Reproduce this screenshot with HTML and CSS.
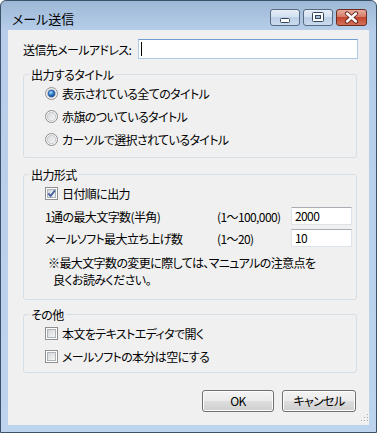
FILE: index.html
```html
<!DOCTYPE html>
<html lang="ja">
<head>
<meta charset="utf-8">
<title>メール送信</title>
<link rel="stylesheet" href="styles.css">
</head>
<body>
<div class="window">
  <div class="titlebar">
    <span class="title">メール送信</span>
    <div class="controls">
      <span class="cbtn">
        <svg width="28" height="15" viewBox="0 0 28 15"><rect x="9.5" y="8.5" width="9" height="4" rx="1" fill="#fff" stroke="#34475c"/></svg>
      </span>
      <span class="cbtn">
        <svg width="28" height="15" viewBox="0 0 28 15"><rect x="8.5" y="2.5" width="11" height="9" rx="1" fill="#fff" stroke="#34475c"/><rect x="11.5" y="5.5" width="5" height="3" fill="#a9bdd2" stroke="#34475c"/></svg>
      </span>
      <span class="cbtn close">
        <svg width="29" height="15" viewBox="0 0 29 15"><path d="M10 3.5 L19 11.5 M19 3.5 L10 11.5" stroke="#5b1e15" stroke-width="4.2" stroke-linecap="round" fill="none"/><path d="M10 3.5 L19 11.5 M19 3.5 L10 11.5" stroke="#fff" stroke-width="2.4" stroke-linecap="round" fill="none"/></svg>
      </span>
    </div>
  </div>
  <div class="client">
    <div class="addr">
      <span class="addr-label">送信先メールアドレス:</span>
      <div class="addr-input"><span class="caret"></span></div>
    </div>

    <fieldset class="group g1">
      <legend>出力するタイトル</legend>
      <div class="rows">
        <div class="row">
          <svg class="radio" width="13" height="13" viewBox="0 0 13 13"><defs><linearGradient id="rbg" x1="0" y1="0" x2="1" y2="1"><stop offset="0" stop-color="#d6d8da"/><stop offset="1" stop-color="#f7f7f7"/></linearGradient><radialGradient id="rdot" cx="0.4" cy="0.35" r="0.7"><stop offset="0" stop-color="#b6dcfc"/><stop offset="0.45" stop-color="#3a86d6"/><stop offset="1" stop-color="#0d3c82"/></radialGradient></defs><circle cx="6.5" cy="6.5" r="6" fill="#f5f5f5" stroke="#8c8e90"/><circle cx="6.5" cy="6.5" r="4.2" fill="url(#rbg)" stroke="#bfc3c7" stroke-width="0.8"/><circle cx="6.5" cy="6.5" r="3.4" fill="url(#rdot)" stroke="#1c4d8e" stroke-width="0.6"/></svg>
          <span>表示されている全てのタイトル</span>
        </div>
        <div class="row">
          <svg class="radio" width="13" height="13" viewBox="0 0 13 13"><circle cx="6.5" cy="6.5" r="6" fill="#f5f5f5" stroke="#8c8e90"/><circle cx="6.5" cy="6.5" r="4.2" fill="url(#rbg)" stroke="#bfc3c7" stroke-width="0.8"/></svg>
          <span>赤旗のついているタイトル</span>
        </div>
        <div class="row">
          <svg class="radio" width="13" height="13" viewBox="0 0 13 13"><circle cx="6.5" cy="6.5" r="6" fill="#f5f5f5" stroke="#8c8e90"/><circle cx="6.5" cy="6.5" r="4.2" fill="url(#rbg)" stroke="#bfc3c7" stroke-width="0.8"/></svg>
          <span>カーソルで選択されているタイトル</span>
        </div>
      </div>
    </fieldset>

    <fieldset class="group g2">
      <legend>出力形式</legend>
      <div class="rows">
        <div class="row">
          <svg class="check" width="13" height="13" viewBox="0 0 13 13"><defs><linearGradient id="cbg" x1="0" y1="0" x2="1" y2="1"><stop offset="0" stop-color="#d3d5d8"/><stop offset="1" stop-color="#f8f8f8"/></linearGradient></defs><rect x="0.5" y="0.5" width="12" height="12" fill="#fff" stroke="#8e8f8f"/><rect x="2.5" y="2.5" width="8" height="8" fill="url(#cbg)" stroke="#aeb3b9"/><path d="M3.3 6.4 L5.6 9 L10 3.4" stroke="#4a64a0" stroke-width="1.9" fill="none"/></svg>
          <span>日付順に出力</span>
        </div>
        <div class="field f1">
          <span class="f-label">1通の最大文字数(半角)</span>
          <span class="f-range">(1〜100,000)</span>
          <div class="num">2000</div>
        </div>
        <div class="field f2">
          <span class="f-label">メールソフト最大立ち上げ数</span>
          <span class="f-range">(1〜20)</span>
          <div class="num">10</div>
        </div>
      </div>
      <div class="note">
        <div>※最大文字数の変更に際しては、マニュアルの注意点を</div>
        <div class="note-2">良くお読みください。</div>
      </div>
    </fieldset>

    <fieldset class="group g3">
      <legend>その他</legend>
      <div class="rows">
        <div class="row">
          <svg class="check" width="13" height="13" viewBox="0 0 13 13"><rect x="0.5" y="0.5" width="12" height="12" fill="#fff" stroke="#8e8f8f"/><rect x="2.5" y="2.5" width="8" height="8" fill="url(#cbg)" stroke="#aeb3b9"/></svg>
          <span>本文をテキストエディタで開く</span>
        </div>
        <div class="row">
          <svg class="check" width="13" height="13" viewBox="0 0 13 13"><rect x="0.5" y="0.5" width="12" height="12" fill="#fff" stroke="#8e8f8f"/><rect x="2.5" y="2.5" width="8" height="8" fill="url(#cbg)" stroke="#aeb3b9"/></svg>
          <span>メールソフトの本分は空にする</span>
        </div>
      </div>
    </fieldset>

    <div class="buttons">
      <button class="btn ok">OK</button>
      <button class="btn cancel">キャンセル</button>
    </div>

    <svg class="grip" width="9" height="9" viewBox="0 0 9 9">
      <g fill="#fff"><rect x="8" y="2" width="1" height="1"/><rect x="5" y="5" width="1" height="1"/><rect x="8" y="5" width="1" height="1"/><rect x="2" y="8" width="1" height="1"/><rect x="5" y="8" width="1" height="1"/><rect x="8" y="8" width="1" height="1"/></g>
      <g fill="#a9a9a9"><rect x="7" y="1" width="1" height="1"/><rect x="4" y="4" width="1" height="1"/><rect x="7" y="4" width="1" height="1"/><rect x="1" y="7" width="1" height="1"/><rect x="4" y="7" width="1" height="1"/><rect x="7" y="7" width="1" height="1"/></g>
    </svg>
  </div>
</div>
</body>
</html>
```

FILE: styles.css
```css
* {
  box-sizing: border-box;
}

html,
body {
  margin: 0;
  padding: 0;
}

body {
  width: 377px;
  height: 433px;
  overflow: hidden;
  background: #ffffff;
  font-family: "Noto Sans CJK JP", "Noto Sans", sans-serif;
  font-size: 12px;
  letter-spacing: -0.6px;
  color: #000;
  font-feature-settings: "palt";
}

.window {
  width: 377px;
  height: 433px;
  border: 1px solid #3d5268;
  border-radius: 6px 6px 0 0;
  background: linear-gradient(#9db8d6, #b6cee9 30px, #bcd4ee);
  display: flex;
  flex-direction: column;
}

.titlebar {
  flex: none;
  height: 29px;
  display: flex;
  align-items: flex-start;
  padding-left: 11px;
}

.title {
  font-size: 13px;
  line-height: 15px;
  margin-top: 10px;
  letter-spacing: 0;
  color: #000;
}

.controls {
  margin-left: auto;
  margin-top: 8px;
  margin-right: 9px;
  display: flex;
  gap: 3px;
}

.cbtn {
  width: 30px;
  height: 17px;
  border: 1px solid #586b80;
  border-radius: 3px;
  display: flex;
  align-items: center;
  justify-content: center;
  background: linear-gradient(#e6eef8, #d3e1f0 45%, #bccfe5 50%, #c9dbef);
}

.cbtn.close {
  width: 31px;
  border-color: #6d2b21;
  background: linear-gradient(#e8ab9d, #d67c69 45%, #c4442e 50%, #d27258);
}

.client {
  flex: 1;
  margin: 0 7px 7px;
  background: #f0f0f0;
  position: relative;
  display: flex;
  flex-direction: column;
}

.addr {
  display: flex;
  align-items: center;
  height: 20px;
  margin: 9px 11px 0 15px;
}

.addr-label {
  width: 115px;
  flex: none;
}

.addr-input {
  flex: 1;
  height: 20px;
  border: 1px solid #aecbe8;
  border-top-color: #6e9cd0;
  background: #fff;
  padding: 2px 0 0 2px;
}

.caret {
  display: block;
  width: 1px;
  height: 14px;
  background: #000;
}

.group {
  margin: 8px 12px 0 15px;
  padding: 0;
  border: 1px solid #d5dfe5;
  border-radius: 3px;
  min-inline-size: 0;
}

.group legend {
  margin-left: 5px;
  padding: 0 2px;
  height: 15px;
  line-height: 15px;
}

.g1 {
  padding-bottom: 6px;
}

.g2 {
  margin-top: 9px;
  padding-bottom: 11px;
}

.g3 {
  margin-top: 7px;
  padding-bottom: 4px;
}

.rows {
  padding-left: 21px;
}

.row {
  height: 23px;
  display: flex;
  align-items: center;
  gap: 4px;
}

.radio,
.check {
  flex: none;
  display: block;
}

.field {
  display: flex;
  align-items: center;
  height: 18px;
}

.f1 {
  margin-top: 2px;
}

.f2 {
  margin-top: 4px;
}

.f-label {
  width: 172px;
  flex: none;
}

.f-range {
  width: 74px;
  flex: none;
}

.num {
  width: 61px;
  height: 18px;
  border: 1px solid #dde3ea;
  border-top-color: #a9acb3;
  border-left-color: #e2e3ea;
  background: #fff;
  padding-left: 3px;
  line-height: 16px;
}

.note {
  margin-top: 7px;
  padding-left: 24px;
  line-height: 17px;
}

.note-2 {
  padding-left: 5px;
}

.buttons {
  display: flex;
  justify-content: flex-end;
  gap: 8px;
  margin: 17px 13px 0 0;
}

.btn {
  height: 22px;
  border: 1px solid #707070;
  border-radius: 3px;
  background: linear-gradient(#f3f3f3, #ebebeb 48%, #dddddd 52%, #cfcfcf);
  box-shadow: inset 0 0 0 1px #fcfcfc;
  font-family: "Noto Sans CJK JP", "Noto Sans", sans-serif;
  font-size: 12px;
  letter-spacing: -0.6px;
  font-feature-settings: "palt";
  color: #000;
  padding: 0;
  line-height: 18px;
}

.ok {
  width: 72px;
}

.cancel {
  width: 74px;
}

.grip {
  position: absolute;
  right: 0;
  bottom: 3px;
}
```
